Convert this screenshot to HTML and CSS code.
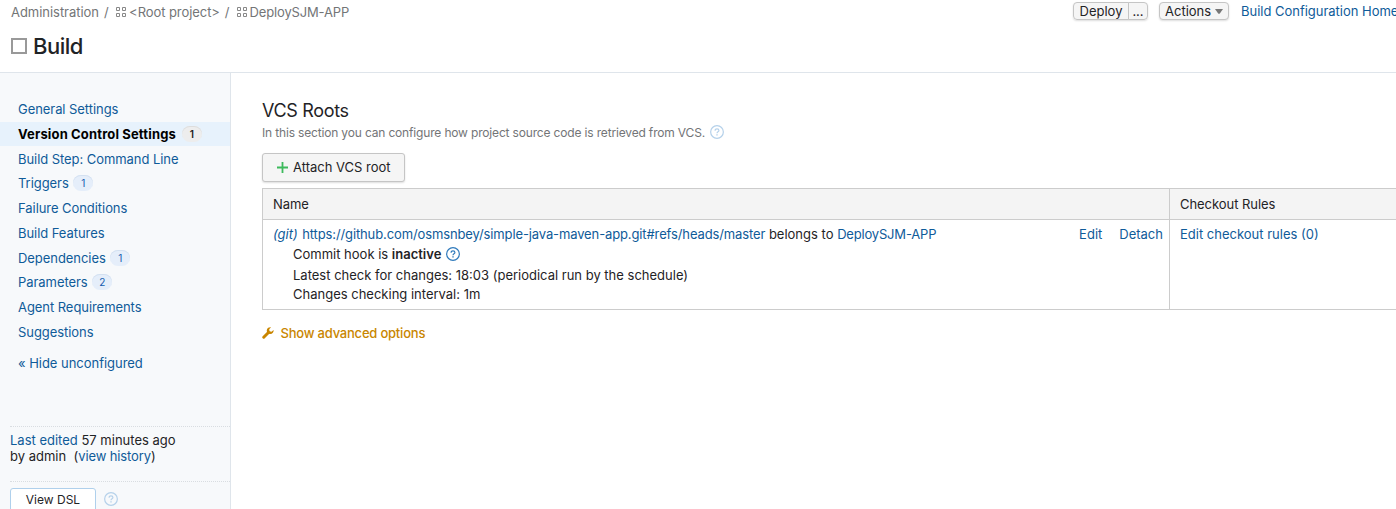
FILE: index.html
```html
<!DOCTYPE html>
<html lang="en">
<head>
<meta charset="utf-8">
<title>Build - VCS Roots</title>
<link rel="stylesheet" href="styles.css">
</head>
<body>
<svg class="defs" width="0" height="0" aria-hidden="true">
  <symbol id="grid" viewBox="0 0 11 11"><path d="M.5.5h3v3h-3zM6.500.5h3v3h-3zM.5 6.500h3v3h-3zM6.500 6.500h3v3h-3z" fill="none" stroke="currentColor"/></symbol>
  <symbol id="help" viewBox="0 0 14 14"><circle cx="7" cy="7" r="6.35" fill="none" stroke="currentColor" stroke-width="1.2"/><path d="M5.1 5.7C5.1 4.5 5.9 3.8 7 3.8s1.9.7 1.9 1.7C8.900 6.900 7 6.800 7 8.200" fill="none" stroke="currentColor" stroke-width="1.200"/><path d="M6.300 9.200h1.400v1.300H6.300z" fill="currentColor"/></symbol>
</svg>
<header class="header">
  <div class="topline">
    <nav class="crumbs">
      <span class="crumb-admin">Administration</span><span class="slash">/</span>
      <svg class="grid-icon"><use href="#grid"/></svg><span class="crumb-root">&lt;Root project&gt;</span><span class="slash">/</span>
      <svg class="grid-icon"><use href="#grid"/></svg><span class="crumb-app">DeploySJM-APP</span>
    </nav>
    <div class="toolbar">
      <div class="btn-group"><button class="tool deploy">Deploy</button><button class="tool more">...</button></div>
      <button class="tool actions">Actions<svg width="8" height="5" viewBox="0 0 8 5"><path d="M0 0h8L5 4.200q-1 1-2 0z" fill="#777"/></svg></button>
      <a class="home">Build Configuration Home</a>
    </div>
  </div>
  <h1 class="title"><span class="square"></span>Build</h1>
</header>
<div class="page">
  <aside class="sidebar">
    <ul class="menu">
      <li><a>General Settings</a></li>
      <li class="active"><a>Version Control Settings</a><span class="badge">1</span></li>
      <li><a>Build Step: Command Line</a></li>
      <li><a>Triggers</a><span class="badge">1</span></li>
      <li><a>Failure Conditions</a></li>
      <li><a>Build Features</a></li>
      <li><a>Dependencies</a><span class="badge">1</span></li>
      <li><a>Parameters</a><span class="badge">2</span></li>
      <li><a>Agent Requirements</a></li>
      <li><a>Suggestions</a></li>
    </ul>
    <a class="hide-link">« Hide unconfigured</a>
    <div class="edited"><a>Last edited</a> 57 minutes ago<br>by admin&nbsp; (<a class="history">view history</a>)</div>
    <div class="dsl"><button class="dsl-btn">View DSL</button><svg class="help"><use href="#help"/></svg></div>
  </aside>
  <main class="content">
    <h2>VCS Roots</h2>
    <p class="note"><span>In this section you can configure how project source code is retrieved from VCS.</span><svg class="help"><use href="#help"/></svg></p>
    <button class="attach"><svg width="11" height="11" viewBox="0 0 11 11"><path d="M5.500 0v11M0 5.500h11" stroke="#3dba5c" stroke-width="1.800"/></svg><span>Attach VCS root</span></button>
    <div class="roots">
      <div class="cell head">Name</div>
      <div class="cell head rules">Checkout Rules</div>
      <div class="cell root">
        <div class="root-info">
          <div class="root-line"><a><i>(git)</i> <span class="url">https://github.com/osmsnbey/simple-java-maven-app.git#refs/heads/master</span></a> belongs to <a class="project">DeploySJM-APP</a></div>
          <div class="detail hook"><span>Commit hook is <b>inactive</b></span><svg class="help"><use href="#help"/></svg></div>
          <div class="detail latest">Latest check for changes: 18:03 (periodical run by the schedule)</div>
          <div class="detail interval">Changes checking interval: 1m</div>
        </div>
        <div class="root-actions"><a>Edit</a><a>Detach</a></div>
      </div>
      <div class="cell rules"><a>Edit checkout rules (0)</a></div>
    </div>
    <a class="advanced"><svg width="12" height="12" viewBox="0 0 13 13"><path d="M1.900 11.100 7 6" stroke="currentColor" stroke-width="3.200" stroke-linecap="round"/><path d="M9.800.4A3.700 3.700 0 1 0 12.500 3.300L10.300 5.100 8.200 4.600 7.800 2.500z" fill="currentColor"/></svg><span>Show advanced options</span></a>
  </main>
</div>
</body>
</html>
```
FILE: styles.css
```css
* { box-sizing: border-box; }
html, body { height: 100%; }
body {
  margin: 0;
  overflow: hidden;
  display: flex;
  flex-direction: column;
  background: #fff;
  color: #1f2326;
  font: 13px/16px Inter, "Liberation Sans", sans-serif;
}
h1, h2, p, ul { margin: 0; padding: 0; }
button { font: inherit; color: inherit; margin: 0; white-space: nowrap; }
svg { flex: none; }
a { color: #0f5b99; }
.defs { position: absolute; }
.header { flex: none; height: 73px; border-bottom: 1px solid #dfe5eb; }
.topline { display: flex; justify-content: space-between; height: 32px; padding-left: 11px; }
.crumbs { display: flex; align-items: center; height: 24px; color: #737577; white-space: nowrap; }
.crumb-admin { letter-spacing: -.04px; }
.crumb-root { letter-spacing: -.07px; }
.crumb-app { letter-spacing: -.15px; }
.slash { margin: 0 7.500px 0 5px; }
.grid-icon { width: 11px; height: 11px; margin-right: 2px; color: #888; }
.crumb-root + .slash { margin-right: 7px; }
.toolbar { display: flex; width: 323px; height: 18px; margin-top: 2px; white-space: nowrap; }
.btn-group { display: flex; margin-right: 11px; box-shadow: 0 1px 2px #0002; border-radius: 4px; }
.tool { height: 18px; padding: 0 5px; background: #f5f5f5; border: 1px solid #c5c5c5; border-radius: 4px; line-height: 16px; }
.deploy { width: 56px; border-radius: 4px 0 0 4px; }
.more { width: 20px; padding: 0; margin-left: -1px; border-radius: 0 4px 4px 0; }
.actions { width: 70px; display: flex; align-items: center; gap: 4px; box-shadow: 0 1px 2px #0002; }
.home { margin-left: 12px; line-height: 18px; letter-spacing: -.02px; }
.title { display: flex; align-items: center; height: 28px; padding-left: 11px; font-size: 22px; line-height: 27px; font-weight: 500; letter-spacing: -.5px; }
.square { width: 16px; height: 16px; margin-right: 6px; border: 2px solid #999; }
.page { flex: 1; display: flex; min-height: 0; }
.sidebar { flex: none; width: 231px; padding-top: 24.300px; background: #f7f9fb; border-right: 1px solid #dfe5eb; }
.menu { list-style: none; letter-spacing: -.06px; }
.menu li { display: flex; align-items: center; height: 24px; margin-bottom: .72px; padding-left: 18px; white-space: nowrap; }
.menu .active { background: #e7f2fc; }
.active a { color: #000; font-weight: 700; letter-spacing: .15px; }
.badge { height: 16px; min-width: 20px; margin-left: 4.500px; padding: 0 7px; border-radius: 8px; background: #e5eefa; color: #175cae; font-size: 10px; line-height: 16px; text-align: center; box-shadow: inset 0 1px #d3e0f0; }
.active .badge { margin-left: 6px; background: #ededed; color: #222; font-weight: 600; box-shadow: inset 0 1px #ddd; }
.hide-link { display: block; margin: 11.500px 0 0 18px; line-height: 16px; letter-spacing: -.03px; }
.edited { height: 55px; margin: 55px 0 0 10px; padding-top: 5px; border-top: 1px dotted #d9dde1; white-space: nowrap; }
.history { letter-spacing: -.12px; }
.dsl { display: flex; align-items: flex-start; margin-left: 10px; padding-top: 6px; border-top: 1px dotted #d9dde1; }
.dsl-btn { width: 86px; height: 24px; padding: 0; background: #fff; border: 1px solid #afd0ec; border-radius: 3px; font-size: 12px; }
.help { width: 14px; height: 14px; color: #b5d1ea; }
.dsl .help { margin: 4px 0 0 8px; }
.content { flex: 1; min-width: 0; padding: 27px 0 0 31px; }
h2 { font-size: 18px; line-height: 22px; font-weight: 400; letter-spacing: -.33px; }
.note { display: flex; height: 31px; padding-top: 3px; color: #737577; font-size: 12px; letter-spacing: -.165px; white-space: nowrap; }
.note .help { margin-left: 5px; }
.attach { display: flex; align-items: center; gap: 5px; width: 143px; height: 29px; padding: 0 14px 1px; background: #f5f5f5; border: 1px solid #c5c5c5; border-radius: 3px; box-shadow: 0 1px 2px #0002; }
.roots { display: grid; grid-template-columns: 906px 1fr; margin-top: 6px; border: 1px solid #ccc; border-right: 0; }
.cell { padding: 6px 6px 0 10px; height: 89px; white-space: nowrap; }
.head { height: 31px; padding-top: 7px; background: #f4f4f4; border-bottom: 1px solid #ccc; letter-spacing: -.05px; }
.rules { border-left: 1px solid #ccc; }
.root { display: flex; justify-content: space-between; }
.root-actions { display: flex; gap: 17px; }
.root-line i { margin-right: .8px; }
.url { letter-spacing: -.12px; }
.project { letter-spacing: -.18px; }
.detail { margin-left: 20px; }
.hook { display: flex; margin-top: 4px; }
.hook .help { margin: 1px 0 0 5px; color: #2f7abc; }
.latest { margin-top: 5px; }
.interval { margin-top: 3px; }
b { font-weight: 600; }
.advanced { display: flex; align-items: center; gap: 6.500px; height: 16px; margin-top: 15px; color: #c98600; font-weight: 500; letter-spacing: -.21px; }
```
